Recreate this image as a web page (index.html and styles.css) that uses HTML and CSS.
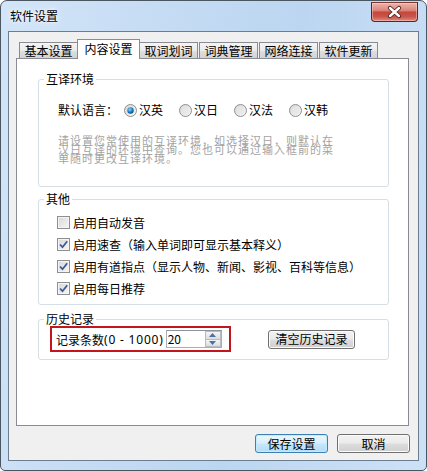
FILE: index.html
```html
<!DOCTYPE html>
<html lang="zh-CN">
<head>
<meta charset="utf-8">
<title>软件设置</title>
<link rel="stylesheet" href="styles.css">
</head>
<body>
<div class="window">
  <div class="titlebar">
    <span class="title">软件设置</span>
    <div class="close">
      <svg width="45" height="19" viewBox="0 0 45 19">
        <path d="M18 5 L27 13 M27 5 L18 13" stroke="#4a2320" stroke-width="4.2" stroke-linecap="round" fill="none"/>
        <path d="M18 5 L27 13 M27 5 L18 13" stroke="#ffffff" stroke-width="2.4" stroke-linecap="round" fill="none"/>
      </svg>
    </div>
  </div>
  <div class="client">
    <div class="tabs">
      <div class="tab">基本设置</div>
      <div class="tab active">内容设置</div>
      <div class="tab">取词划词</div>
      <div class="tab">词典管理</div>
      <div class="tab">网络连接</div>
      <div class="tab">软件更新</div>
    </div>
    <div class="panel">
      <div class="group g1">
        <span class="gtitle">互译环境</span>
        <div class="lang-row">
          <span class="lang-label">默认语言：</span>
          <span class="radio">
            <svg class="rb" width="13" height="13" viewBox="0 0 13 13">
              <defs>
                <linearGradient id="rg1" x1="0" y1="0" x2="1" y2="1"><stop offset="0" stop-color="#d5d5d5"/><stop offset="1" stop-color="#fafafa"/></linearGradient>
                <radialGradient id="dot" cx="0.4" cy="0.35" r="0.7"><stop offset="0" stop-color="#8fd3f8"/><stop offset="0.6" stop-color="#1b7bc2"/><stop offset="1" stop-color="#0f3f72"/></radialGradient>
              </defs>
              <circle cx="6.5" cy="6.5" r="6" fill="url(#rg1)" stroke="#8e8f8f"/>
              <circle cx="6.5" cy="6.5" r="3.2" fill="url(#dot)"/>
            </svg>汉英</span>
          <span class="radio">
            <svg class="rb" width="13" height="13" viewBox="0 0 13 13">
              <circle cx="6.5" cy="6.5" r="6" fill="url(#rg1)" stroke="#8e8f8f"/>
              <circle cx="6.5" cy="6.5" r="4" fill="#e6e6e6" opacity="0.6"/>
            </svg>汉日</span>
          <span class="radio">
            <svg class="rb" width="13" height="13" viewBox="0 0 13 13">
              <circle cx="6.5" cy="6.5" r="6" fill="url(#rg1)" stroke="#8e8f8f"/>
              <circle cx="6.5" cy="6.5" r="4" fill="#e6e6e6" opacity="0.6"/>
            </svg>汉法</span>
          <span class="radio">
            <svg class="rb" width="13" height="13" viewBox="0 0 13 13">
              <circle cx="6.5" cy="6.5" r="6" fill="url(#rg1)" stroke="#8e8f8f"/>
              <circle cx="6.5" cy="6.5" r="4" fill="#e6e6e6" opacity="0.6"/>
            </svg>汉韩</span>
        </div>
        <p class="desc">请设置您常使用的互译环境，如选择汉日，则默认在<br>汉日互译的环境中查询。您也可以通过输入框前的菜<br>单随时更改互译环境。</p>
      </div>

      <div class="group g2">
        <span class="gtitle">其他</span>
        <div class="check-row"><span class="cb"></span>启用自动发音</div>
        <div class="check-row"><span class="cb on"><svg width="11" height="11" viewBox="0 0 11 11"><path d="M2 5.5 L4.5 8.2 L9.2 2.2" stroke="#3d5a98" stroke-width="1.8" fill="none"/></svg></span>启用速查（输入单词即可显示基本释义）</div>
        <div class="check-row"><span class="cb on"><svg width="11" height="11" viewBox="0 0 11 11"><path d="M2 5.5 L4.5 8.2 L9.2 2.2" stroke="#3d5a98" stroke-width="1.8" fill="none"/></svg></span>启用有道指点（显示人物、新闻、影视、百科等信息）</div>
        <div class="check-row"><span class="cb on"><svg width="11" height="11" viewBox="0 0 11 11"><path d="M2 5.5 L4.5 8.2 L9.2 2.2" stroke="#3d5a98" stroke-width="1.8" fill="none"/></svg></span>启用每日推荐</div>
      </div>

      <div class="group g3">
        <span class="gtitle">历史记录</span>
        <div class="hist">
          <span>记录条数</span><span class="ascii">(0 - 1000)</span>
          <div class="num">
            <span class="num-val">20</span>
            <div class="spin">
              <span class="spin-btn"><svg width="7" height="4" viewBox="0 0 7 4"><path d="M0 4 L3.5 0 L7 4 Z" fill="#4d6fa8"/></svg></span>
              <span class="spin-btn"><svg width="7" height="4" viewBox="0 0 7 4"><path d="M0 0 L3.5 4 L7 0 Z" fill="#4d6fa8"/></svg></span>
            </div>
          </div>
        </div>
        <button class="btn btn-clear">清空历史记录</button>
      </div>
    </div>
    <div class="footer">
      <button class="btn default">保存设置</button>
      <button class="btn">取消</button>
    </div>
  </div>
</div>
</body>
</html>
```

FILE: styles.css
```css
* { box-sizing: border-box; }
html, body { margin: 0; padding: 0; }
body {
  width: 427px;
  height: 471px;
  background: #ffffff;
  font-family: "Noto Sans CJK SC", "Noto Sans", sans-serif;
  font-size: 12px;
  color: #000;
  overflow: hidden;
}

.window {
  width: 427px;
  height: 471px;
  border: 1px solid #4b5663;
  border-radius: 7px 7px 5px 5px;
  background: linear-gradient(100deg, #d3e5f8 0%, #c4dbf3 35%, #bcd6f1 60%, #cde1f6 100%);
  display: flex;
  flex-direction: column;
  overflow: hidden;
}

.titlebar {
  height: 30px;
  flex: none;
  display: flex;
  align-items: flex-start;
  padding-left: 9px;
}
.title {
  margin-top: 8px;
  line-height: 14px;
  color: #000;
  text-shadow: 0 0 6px #ffffff, 0 0 3px #ffffff;
}
.close {
  margin-left: auto;
  margin-right: 8px;
  margin-top: 1px;
  width: 47px;
  height: 20px;
  border: 1px solid #5b2622;
  border-top-color: #7d3a35;
  border-radius: 0 0 4px 4px;
  background: linear-gradient(#edb3ab 0%, #de887d 40%, #c6473b 52%, #c9544a 75%, #e0897d 100%);
  box-shadow: inset 0 0 0 1px rgba(255, 220, 215, 0.45);
}
.close svg { display: block; }

.client {
  margin: 0 7px;
  height: 430px;
  border: 1px solid #6d7d90;
  background: #f0f0f0;
  padding: 7px 9px 0 7px;
}

.tabs {
  display: flex;
  align-items: flex-end;
  height: 19px;
  padding-left: 3px;
  gap: 1px;
  position: relative;
  z-index: 1;
}
.tab {
  width: 59px;
  height: 16px;
  border: 1px solid #898c95;
  border-bottom: none;
  background: linear-gradient(#f4f4f4 0%, #ebebeb 50%, #dedede 55%, #d3d3d3 100%);
  text-align: center;
  line-height: 14px;
  padding-top: 1px;
  white-space: nowrap;
}
.tab.active {
  width: 63px;
  height: 20px;
  margin: 0 -2px -1px;
  background: #ffffff;
  padding-top: 2px;
}

.panel {
  height: 368px;
  border: 1px solid #898c95;
  background: #ffffff;
  padding: 0 19px 0 21px;
}

.group {
  position: relative;
  border: 1px solid #d5dfe5;
  border-radius: 3px;
}
.gtitle {
  position: absolute;
  top: -8px;
  left: 5px;
  padding: 0 2px;
  background: #ffffff;
  line-height: 14px;
}

.g1 {
  margin-top: 20px;
  height: 108px;
  padding: 23px 0 0 19px;
}
.lang-row {
  display: flex;
  align-items: center;
  height: 14px;
  line-height: 14px;
}
.lang-label { margin-right: 6px; }
.radio {
  display: flex;
  align-items: center;
  gap: 2px;
  margin-right: 16px;
}
.rb { display: block; }
.desc {
  margin: 19px 0 0;
  color: #a3a3a3;
  font-size: 11px;
  letter-spacing: 1px;
  line-height: 9px;
  white-space: nowrap;
}

.g2 {
  margin-top: 12px;
  height: 106px;
  padding: 11px 0 0 18px;
}
.check-row {
  display: flex;
  align-items: center;
  gap: 3px;
  height: 22px;
  white-space: nowrap;
}
.cb {
  width: 13px;
  height: 13px;
  border: 1px solid #8e8f8f;
  background: linear-gradient(135deg, #d8d8d8 0%, #f6f6f6 100%);
  box-shadow: inset 0 0 0 1px #f4f4f4;
  display: flex;
  align-items: center;
  justify-content: center;
  flex: none;
}
.cb svg { display: block; }

.g3 {
  margin-top: 14px;
  height: 41px;
  padding: 6px 0 0 11px;
  display: flex;
  align-items: center;
  align-content: flex-start;
  flex-wrap: wrap;
}
.hist {
  display: flex;
  align-items: center;
  width: 181px;
  height: 26px;
  border: 2px solid #c4151c;
  padding-left: 4px;
  white-space: nowrap;
}
.ascii {
  font-family: "Noto Sans", sans-serif;
  font-size: 12px;
  letter-spacing: 0.8px;
  white-space: pre;
}
.num {
  margin-left: 2px;
  width: 56px;
  height: 18px;
  border: 1px solid #abadb3;
  border-top-color: #8f9399;
  background: #ffffff;
  display: flex;
  align-items: stretch;
}
.num-val {
  flex: 1;
  padding-left: 1px;
  line-height: 15px;
}
.spin {
  width: 16px;
  display: flex;
  flex-direction: column;
}
.spin-btn {
  flex: 1;
  border: 1px solid #b7bcc4;
  background: linear-gradient(#f5f5f5, #dcdcdc);
  display: flex;
  align-items: center;
  justify-content: center;
}
.spin-btn + .spin-btn { border-top: none; }
.spin-btn svg { display: block; }

.btn {
  font-family: "Noto Sans CJK SC", "Noto Sans", sans-serif;
  font-size: 12px;
  color: #000;
  height: 19px;
  padding: 0;
  line-height: 16px;
  border: 1px solid #707070;
  border-radius: 3px;
  background: linear-gradient(#f2f2f2 0%, #ebebeb 48%, #dddddd 52%, #cfcfcf 100%);
  box-shadow: inset 0 0 0 1px #fbfbfb;
}
.btn-clear {
  width: 87px;
  margin-left: 37px;
}

.footer {
  display: flex;
  justify-content: flex-end;
  gap: 9px;
  margin-top: 8px;
  margin-right: -1px;
}
.footer .btn { width: 73px; }
.btn.default {
  border-color: #3c7fb1;
  background: linear-gradient(#eaf6fd 0%, #d9f0fc 48%, #c6e7fb 52%, #b3dcf5 100%);
  box-shadow: inset 0 0 0 1px #c4eaff;
}
```
